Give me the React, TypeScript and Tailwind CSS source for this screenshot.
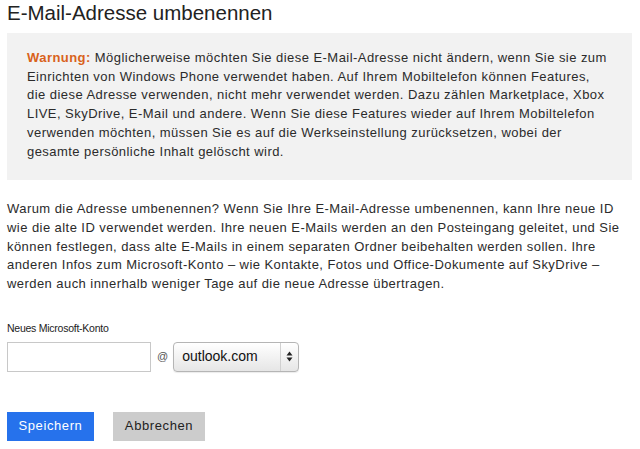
const warningLines = [
  "Einrichten von Windows Phone verwendet haben. Auf Ihrem Mobiltelefon können Features,",
  "die diese Adresse verwenden, nicht mehr verwendet werden. Dazu zählen Marketplace, Xbox",
  "LIVE, SkyDrive, E-Mail und andere. Wenn Sie diese Features wieder auf Ihrem Mobiltelefon",
  "verwenden möchten, müssen Sie es auf die Werkseinstellung zurücksetzen, wobei der",
  "gesamte persönliche Inhalt gelöscht wird.",
]

const infoLines = [
  "Warum die Adresse umbenennen? Wenn Sie Ihre E-Mail-Adresse umbenennen, kann Ihre neue ID",
  "wie die alte ID verwendet werden. Ihre neuen E-Mails werden an den Posteingang geleitet, und Sie",
  "können festlegen, dass alte E-Mails in einem separaten Ordner beibehalten werden sollen. Ihre",
  "anderen Infos zum Microsoft-Konto – wie Kontakte, Fotos und Office-Dokumente auf SkyDrive –",
  "werden auch innerhalb weniger Tage auf die neue Adresse übertragen.",
]

export default function App() {
  return (
    <div className="min-h-[449px] bg-white px-[7px] pt-px text-[#2b2b2b] font-['Liberation_Sans',Arial,sans-serif]">
      <h1 className="text-[20.5px] leading-[24px] font-normal text-[#222]">E-Mail-Adresse umbenennen</h1>

      <div className="mt-[8px] w-[625px] bg-[#f2f2f2] pl-[20px] pr-[10px] pt-[16px] pb-[19px] text-[13px] leading-[18.7px] tracking-[0.45px] whitespace-nowrap">
        <div>
          <span className="font-bold text-[#d9621c]">Warnung:</span> Möglicherweise möchten Sie diese E-Mail-Adresse nicht ändern, wenn Sie sie zum
        </div>
        {warningLines.map((l, i) => (
          <div key={i}>{l}</div>
        ))}
      </div>

      <div className="mt-[20px] text-[13px] leading-[18.7px] tracking-[0.44px] whitespace-nowrap">
        {infoLines.map((l, i) => (
          <div key={i}>{l}</div>
        ))}
      </div>

      <div className="mt-[27px] text-[10.5px] leading-[14px] tracking-[-0.25px] text-[#222]">Neues Microsoft-Konto</div>

      <div className="mt-[7px] flex items-center">
        <input
          type="text"
          className="h-[30px] w-[144px] border border-[#c8c8c8] bg-white px-2 text-[13px] outline-none"
        />
        <span className="ml-[6px] text-[11px] text-[#555]">@</span>
        <div className="ml-[5px] flex h-[30px] w-[126px] items-center rounded-[4px] border border-[#b5b5b5] bg-gradient-to-b from-white to-[#e6e6e6] shadow-[0_1px_1px_rgba(0,0,0,0.08)]">
          <span className="flex-1 pl-[8px] text-[14px] text-[#111]">outlook.com</span>
          <span className="flex h-full w-[18px] items-center justify-center border-l border-[#d0d0d0]">
            <svg width="7" height="11" viewBox="0 0 7 11">
              <path d="M3.5 0.5 L6.5 4.5 L0.5 4.5 Z" fill="#222" />
              <path d="M3.5 10.5 L6.5 6.5 L0.5 6.5 Z" fill="#222" />
            </svg>
          </span>
        </div>
      </div>

      <div className="mt-[40px] flex gap-[19px]">
        <button className="h-[29px] w-[87px] bg-[#2672ec] text-[13px] tracking-[0.6px] text-white">Speichern</button>
        <button className="h-[29px] w-[92px] bg-[#cccccc] text-[13px] tracking-[0.6px] text-[#222]">Abbrechen</button>
      </div>
    </div>
  );
}
